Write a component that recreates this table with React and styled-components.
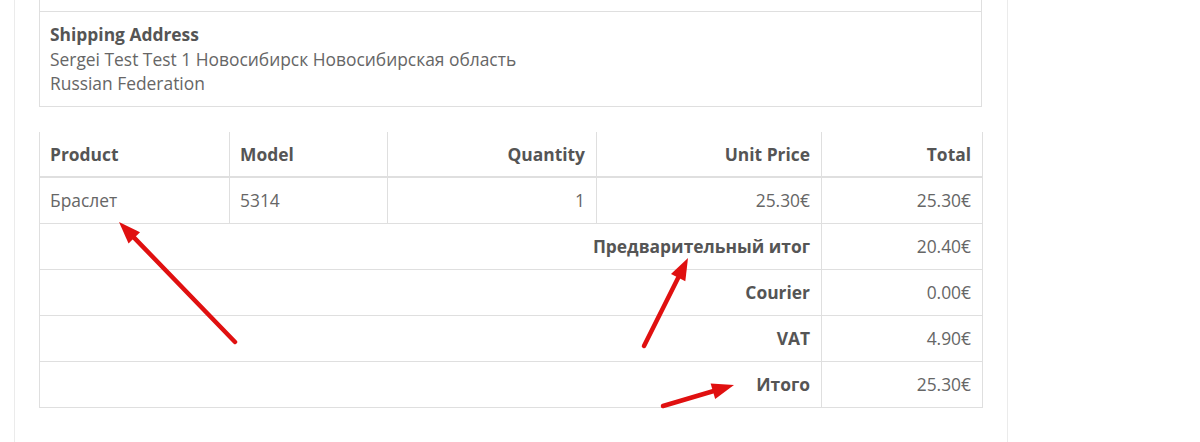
import React from "react";
import styled, { createGlobalStyle } from "styled-components";

const GlobalStyle = createGlobalStyle`
  body {
    margin: 0;
    background: #fff;
    font-family: "Open Sans", "Liberation Sans", sans-serif;
    color: #666;
  }
`;

// page & content column
const Page = styled.div`
  position: relative;
  width: 1200px;
  height: 442px;
  overflow: hidden;
`;
const Panel = styled.div`
  margin-left: 14px;
  width: 994px;
  height: 100%;
  box-sizing: border-box;
  border-left: 1px solid #ebebeb;
  border-right: 1px solid #ebebeb;
  padding: 0 24px 0 24px;
`;

// tables
const Table = styled.table`
  width: 943px;
  border-collapse: collapse;
  table-layout: fixed;
  font-size: 17.4px;
  line-height: 22.9px;
  margin-top: ${({ $gap }) => $gap || 0}px;
`;
const Cell = styled.td`
  border: 1px solid #dfdfdf;
  padding: 11px 11px 11px 10px;
  text-align: ${({ $align }) => $align || "left"};
  font-weight: ${({ $bold }) => ($bold ? 700 : 400)};
  color: ${({ $bold }) => ($bold ? "#555" : "#666")};
  white-space: nowrap;
`;
const HeadCell = styled(Cell)`
  border-top: none;
  border-bottom: 2px solid #dfdfdf;
`;
const StubCell = styled.td`
  height: 11px;
  padding: 0;
  border-left: 1px solid #dfdfdf;
  border-right: 1px solid #dfdfdf;
`;
const AddressCell = styled.td`
  border: 1px solid #dfdfdf;
  padding: 10px 10px 10px;
  line-height: 24.5px;
  color: #666;
`;
const Label = styled.div`
  font-weight: 700;
  color: #555;
`;

// annotation arrows
const Overlay = styled.svg`
  position: absolute;
  left: 0;
  top: 0;
  pointer-events: none;
`;

const Arrow = ({ x1, y1, x2, y2 }) => {
  const a = Math.atan2(y2 - y1, x2 - x1);
  const len = 22;
  const w = 8;
  const bx = x2 - len * Math.cos(a);
  const by = y2 - len * Math.sin(a);
  const px = -Math.sin(a) * w;
  const py = Math.cos(a) * w;
  return (
    <g>
      <line x1={x1} y1={y1} x2={bx} y2={by} stroke="#e01010" strokeWidth="4.5" strokeLinecap="round" />
      <polygon
        points={`${x2},${y2} ${bx + px},${by + py} ${bx - px},${by - py}`}
        fill="#e01010"
      />
    </g>
  );
};

const cols = [190, 158, 209, 225, 161];

const items = [
  { product: "Браслет", model: "5314", qty: "1", price: "25.30€", total: "25.30€" },
];

const totals = [
  { title: "Предварительный итог", value: "20.40€" },
  { title: "Courier", value: "0.00€" },
  { title: "VAT", value: "4.90€" },
  { title: "Итого", value: "25.30€" },
];

const App = () => {
  return (
    <>
      <GlobalStyle />
      <Page>
        <Panel>
          <Table>
            <tbody>
              <tr>
                <StubCell />
              </tr>
              <tr>
                <AddressCell>
                  <Label>Shipping Address</Label>
                  Sergei Test Test 1 Новосибирск Новосибирская область
                  <br />
                  Russian Federation
                </AddressCell>
              </tr>
            </tbody>
          </Table>

          <Table $gap={25}>
            <colgroup>
              {cols.map((w, i) => (
                <col key={i} style={{ width: w }} />
              ))}
            </colgroup>
            <thead>
              <tr>
                <HeadCell $bold>Product</HeadCell>
                <HeadCell $bold>Model</HeadCell>
                <HeadCell $bold $align="right">Quantity</HeadCell>
                <HeadCell $bold $align="right">Unit Price</HeadCell>
                <HeadCell $bold $align="right">Total</HeadCell>
              </tr>
            </thead>
            <tbody>
              {items.map((it) => (
                <tr key={it.model}>
                  <Cell>{it.product}</Cell>
                  <Cell>{it.model}</Cell>
                  <Cell $align="right">{it.qty}</Cell>
                  <Cell $align="right">{it.price}</Cell>
                  <Cell $align="right">{it.total}</Cell>
                </tr>
              ))}
              {totals.map((t) => (
                <tr key={t.title}>
                  <Cell colSpan={4} $bold $align="right">{t.title}</Cell>
                  <Cell $align="right">{t.value}</Cell>
                </tr>
              ))}
            </tbody>
          </Table>
        </Panel>

        <Overlay width="1200" height="442">
          <Arrow x1={235} y1={342} x2={119} y2={222} />
          <Arrow x1={644} y1={346} x2={688} y2={258} />
          <Arrow x1={663} y1={406} x2={734} y2={385} />
        </Overlay>
      </Page>
    </>
  );
};

export default App;
